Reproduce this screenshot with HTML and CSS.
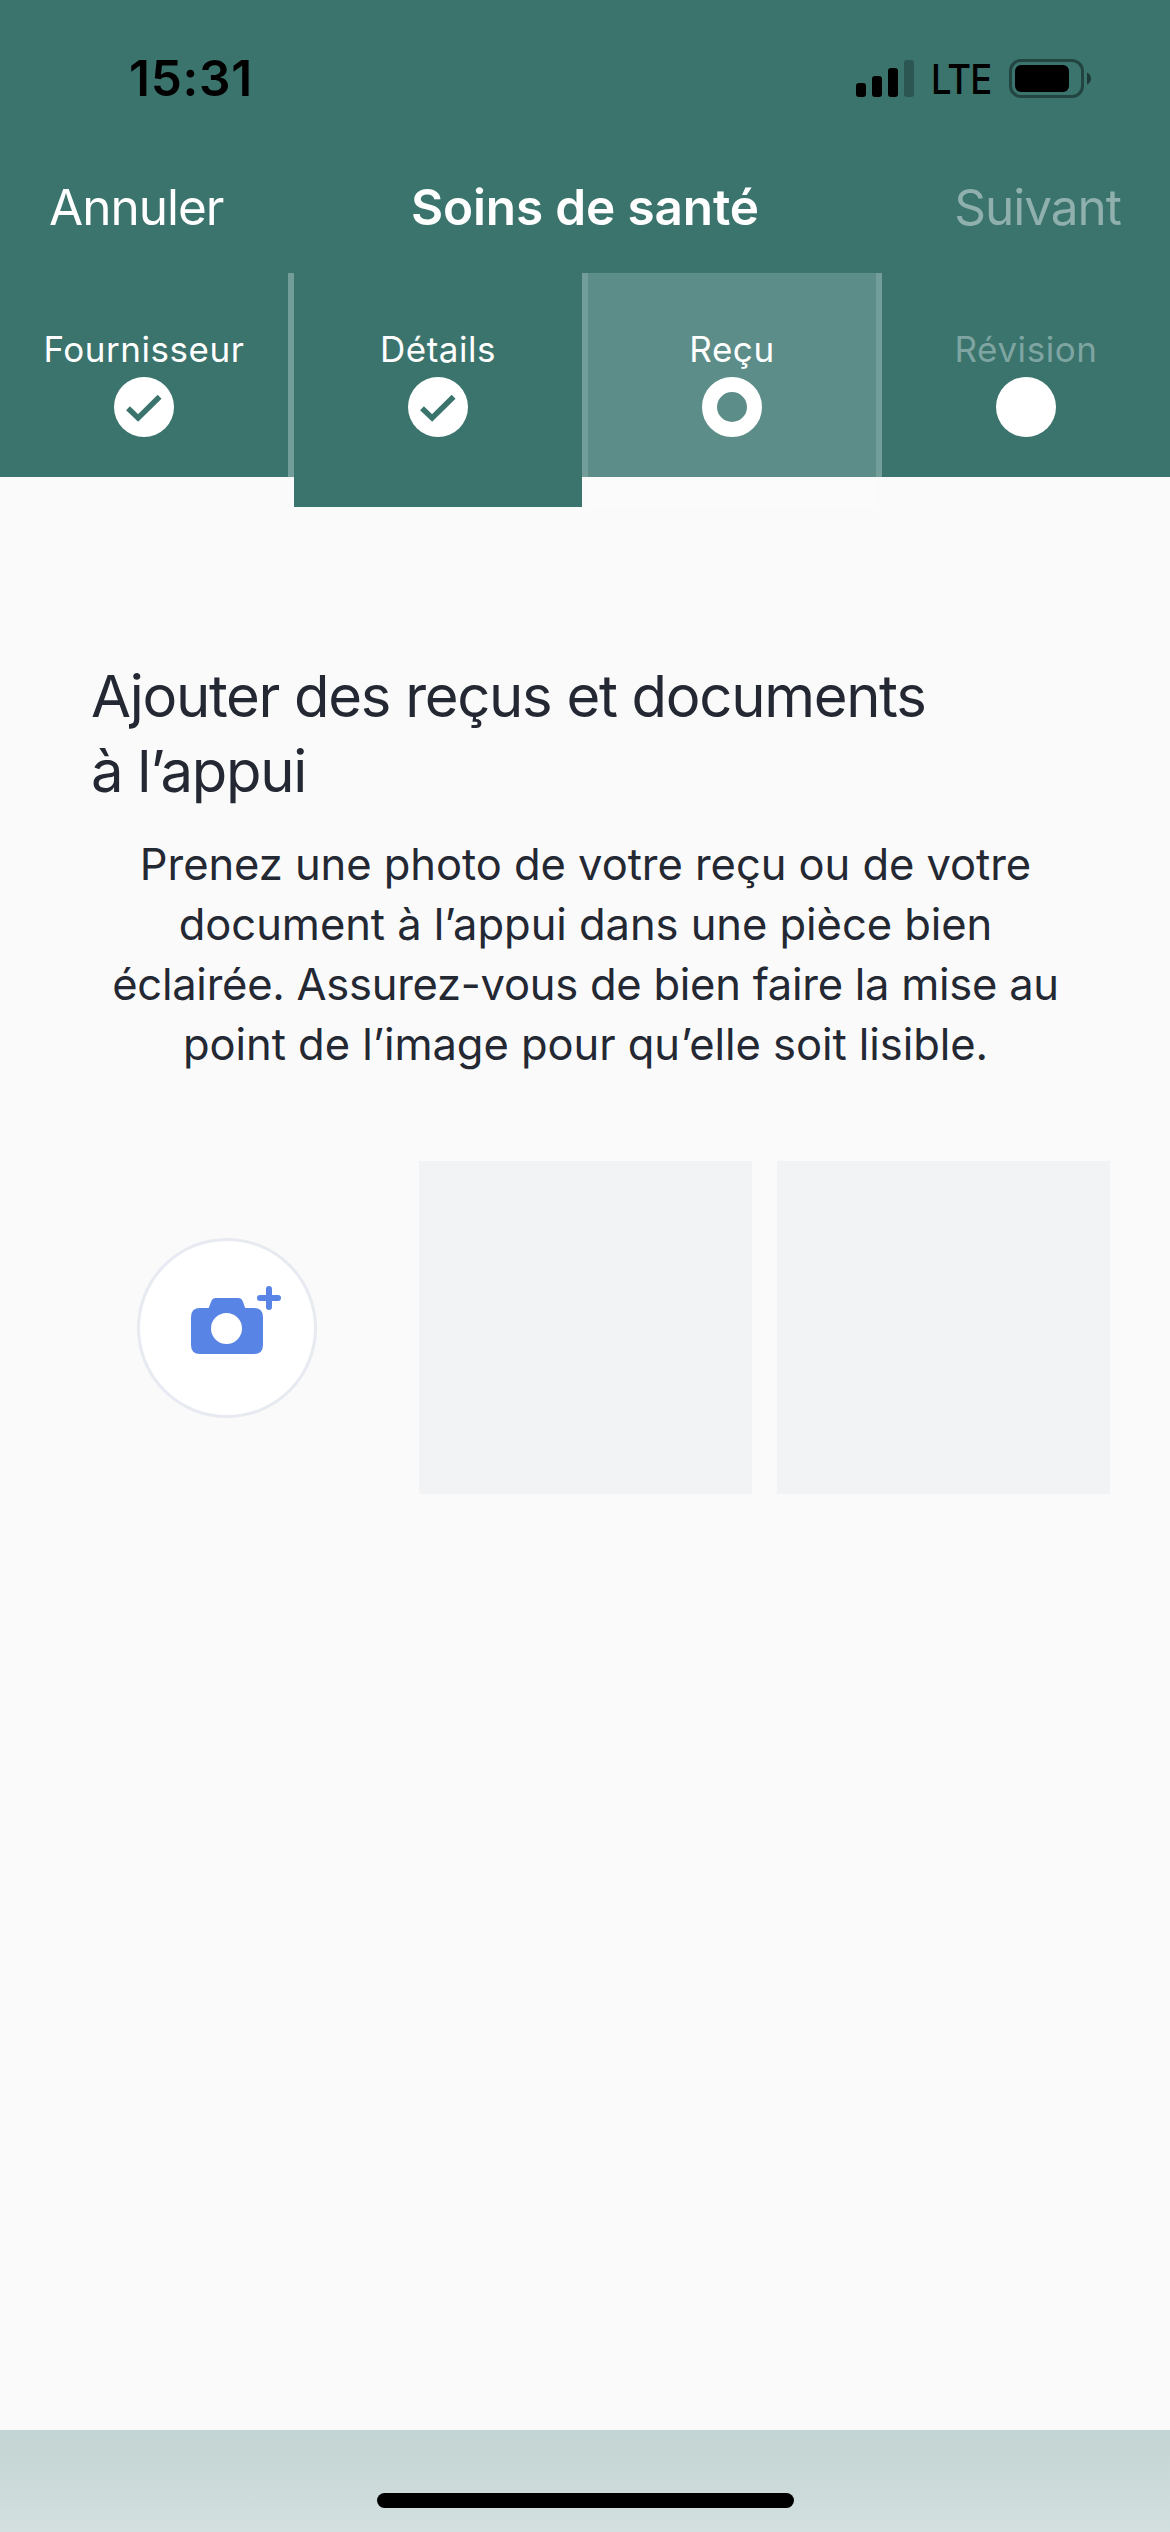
FILE: index.html
```html
<!DOCTYPE html>
<html lang="fr">
<head>
<meta charset="utf-8">
<title>Soins de santé</title>
<link rel="stylesheet" href="styles.css">
</head>
<body>
<div class="screen">
  <header class="top">
    <div class="status">
      <span class="time">15:31</span>
      <div class="indicators">
        <svg class="signal" width="58" height="37" viewBox="0 0 58 37">
          <rect x="0" y="23" width="10" height="14" rx="3"/>
          <rect x="16" y="16" width="10" height="21" rx="3"/>
          <rect x="32" y="8" width="10" height="29" rx="3"/>
          <rect class="dim" x="48" y="0" width="10" height="37" rx="3"/>
        </svg>
        <span class="network"><span>LTE</span></span>
        <svg class="battery" width="82" height="39" viewBox="0 0 82 39">
          <rect class="shell" x="1.5" y="1.5" width="72" height="36" rx="10.5"/>
          <rect x="6" y="6" width="54" height="27" rx="6"/>
          <path class="cap" d="M78 13.500C80.500 14.500 82 17 82 19.500S80.500 24.500 78 25.500Z"/>
        </svg>
      </div>
    </div>
    <nav class="navbar">
      <span class="cancel">Annuler</span>
      <h1 class="title">Soins de santé</h1>
      <span class="next">Suivant</span>
    </nav>
    <div class="steps">
      <div class="step">
        <span class="label">Fournisseur</span>
        <svg class="dot" viewBox="0 0 60 60"><circle cx="30" cy="30" r="30"/><path class="check" d="M14 31.300L24.100 41L45.600 19.800"/></svg>
      </div>
      <div class="step tall">
        <span class="label">Détails</span>
        <svg class="dot" viewBox="0 0 60 60"><circle cx="30" cy="30" r="30"/><path class="check" d="M14 31.300L24.100 41L45.600 19.800"/></svg>
      </div>
      <div class="step current">
        <span class="label">Reçu</span>
        <svg class="dot" viewBox="0 0 60 60"><circle class="ring" cx="30" cy="30" r="22.500"/></svg>
      </div>
      <div class="step pending">
        <span class="label">Révision</span>
        <svg class="dot" viewBox="0 0 60 60"><circle cx="30" cy="30" r="30"/></svg>
      </div>
    </div>
  </header>
  <main class="content">
    <h2 class="heading">Ajouter des reçus et documents<br>à l’appui</h2>
    <p class="intro">Prenez une photo de votre reçu ou de votre<br>document à l’appui dans une pièce bien<br><span class="tight">éclairée. Assurez-vous de bien faire la mise au</span><br>point de l’image pour qu’elle soit lisible.</p>
    <div class="photos">
      <div class="slot add">
        <button class="camera" aria-label="Ajouter une photo">
          <svg width="90" height="68" viewBox="0 0 90 68">
            <path fill-rule="evenodd" d="M9 22H17.700L20.300 15.200Q21.500 12 25 12H47Q50.500 12 51.700 15.200L54.200 22H63Q72 22 72 31V59Q72 68 63 68H9Q0 68 0 59V31Q0 22 9 22ZM35.500 27A15.500 15.500 0 1 0 35.500 58A15.500 15.500 0 1 0 35.500 27Z"/>
            <path class="plus" d="M78 3V21M69 12H87"/>
          </svg>
        </button>
      </div>
      <div class="slot"></div>
      <div class="slot"></div>
    </div>
  </main>
  <footer class="bottom"><div class="home"></div></footer>
</div>
</body>
</html>
```
FILE: styles.css
```css
* { box-sizing: border-box; }
body { margin: 0; font-family: Inter, "Liberation Sans", sans-serif; background: #fafafa; color: #232833; }
h1, h2, p { margin: 0; font-weight: 400; }
.screen { width: 1170px; height: 2532px; display: flex; flex-direction: column; overflow: hidden; }
.top { background: #3b736d; height: 477px; color: #fff; }
.status { height: 156px; padding: 0 79px 0 129px; display: flex; justify-content: space-between; align-items: center; color: #000; }
.time { font-size: 49.500px; font-weight: 600; line-height: 60px; letter-spacing: 0.700px; }
.indicators { display: flex; align-items: center; gap: 18px; }
.signal .dim { opacity: .25; }
.network { width: 59px; padding-top: 2px; font-size: 41px; font-weight: 500; line-height: 50px; letter-spacing: -1px; white-space: nowrap; }
.network span { display: inline-block; transform: scaleX(.89); transform-origin: left; margin-left: -1px; }
.battery .shell { fill: none; stroke: #000; stroke-width: 3; opacity: .4; }
.battery .cap { opacity: .5; }
.navbar { height: 117px; padding: 0 48px 15px; display: grid; grid-template-columns: 1fr auto 1fr; align-items: center; font-size: 49.500px; line-height: 60px; letter-spacing: -1px; }
.cancel { padding-left: 1px; }
.title { font-size: 49.500px; font-weight: 600; letter-spacing: -0.150px; }
.next { text-align: right; color: #90b0ad; padding-right: 1px; }
.steps { display: flex; height: 204px; gap: 6px; background: #739d99; }
.step { width: 288px; height: 204px; padding-top: 55px; background: #3b736d; display: flex; flex-direction: column; align-items: center; }
.step.tall { height: 234px; }
.step.current { height: 234px; background: #5d8d89; border-bottom: 30px solid #fbfbfb; }
.step.pending .label { color: #7ea5a1; }
.label { font-size: 35px; line-height: 42px; height: 49px; letter-spacing: 0.550px; }
.dot { width: 60px; height: 60px; fill: #fff; }
.dot .check { fill: none; stroke: #3b736d; stroke-width: 5.500; }
.dot .ring { fill: none; stroke: #fff; stroke-width: 15; }
.content { flex: 1; padding: 182px 60px 0 61px; }
.heading { padding-left: 30px; font-size: 58px; line-height: 75px; letter-spacing: -1.300px; white-space: nowrap; }
.intro { margin-top: 25px; font-size: 43.500px; line-height: 60px; text-align: center; white-space: nowrap; letter-spacing: -0.050px; }
.intro .tight { letter-spacing: -0.250px; }
.photos { margin-top: 87px; display: grid; grid-template-columns: repeat(3, 333px); gap: 25px; }
.slot { height: 333px; background: #f2f3f5; }
.add { background: none; display: flex; align-items: center; justify-content: center; padding: 1px 1px 0 0; }
.camera { width: 180px; height: 180px; padding: 0 0 16px 18px; border: 3px solid #e8eaf1; border-radius: 50%; background: #fff; display: flex; align-items: center; justify-content: center; }
.camera svg { fill: #5784e5; }
.camera .plus { fill: none; stroke: #5784e5; stroke-width: 6; stroke-linecap: round; }
.bottom { height: 102px; padding-top: 63px; background: linear-gradient(#c2d4d3, #d3e0df); }
.home { width: 417px; height: 15px; margin: 0 auto; border-radius: 8px; background: #000; }
```
